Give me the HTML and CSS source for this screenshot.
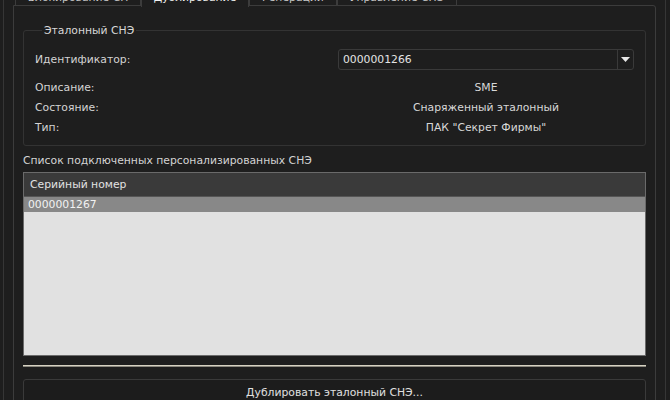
FILE: index.html
```html
<!DOCTYPE html>
<html lang="ru">
<head>
<meta charset="utf-8">
<title>Дублирование</title>
<link rel="stylesheet" href="styles.css">
</head>
<body>
<div class="frame">
  <div class="tabs">
    <div class="tab tab-1">Блокирование СН</div>
    <div class="tab tab-2 active">Дублирование</div>
    <div class="tab tab-3">Генерации</div>
    <div class="tab tab-4">Управление СНЭ</div>
  </div>
  <div class="pane">
    <div class="group">
      <div class="group-title">Эталонный СНЭ</div>
      <div class="form">
        <div class="label id-label">Идентификатор:</div>
        <div class="combo">
          <span class="combo-text">0000001266</span>
          <span class="combo-btn">
            <svg width="9" height="5" viewBox="0 0 9 5"><path d="M0 0H9L4.5 5Z" fill="#e8e8e8"/></svg>
          </span>
        </div>
        <div class="label">Описание:</div>
        <div class="value">SME</div>
        <div class="label">Состояние:</div>
        <div class="value">Снаряженный эталонный</div>
        <div class="label">Тип:</div>
        <div class="value">ПАК "Секрет Фирмы"</div>
      </div>
    </div>
    <div class="list-label">Список подключенных персонализированных СНЭ</div>
    <div class="list">
      <div class="list-header">Серийный номер</div>
      <div class="list-row selected">0000001267</div>
      <div class="list-fill"></div>
    </div>
    <div class="separator"></div>
    <div class="button">Дублировать эталонный СНЭ...</div>
  </div>
</div>
</body>
</html>
```

FILE: styles.css
```css
html, body {
  margin: 0;
  padding: 0;
  height: 100%;
  overflow: hidden;
  background: #1e1e1e;
}

body {
  font-family: "DejaVu Sans", Tahoma, sans-serif;
  font-size: 10.8px;
  color: #d4d4d4;
}

.frame {
  margin: -14px 4px 0 3px;
  padding: 0 9px;
  height: 440px;
  border-left: 1px solid #363636;
  border-right: 1px solid #363636;
  display: flex;
  flex-direction: column;
}

.tabs {
  display: flex;
  height: 20px;
  padding-left: 2px;
}

.tab {
  box-sizing: border-box;
  height: 20px;
  border: 1px solid #3c3c3c;
  border-radius: 3px 3px 0 0;
  color: #c8c8c8;
  padding-top: 5px;
  line-height: 12px;
  text-align: center;
  background: #1e1e1e;
  white-space: nowrap;
  overflow: hidden;
}

.tab-1 { width: 126px; }
.tab-2 { width: 108px; }
.tab-3 { width: 88px; }
.tab-4 { width: 120px; }

.tab.active {
  position: relative;
  z-index: 1;
  height: 21px;
  margin-bottom: -1px;
  border-bottom: none;
  color: #f2f2f2;
}

.pane {
  flex: 1;
  border: 1px solid #3c3c3c;
  border-radius: 0 3px 0 0;
  margin-top: -1px;
  padding: 24px 9px 0 9px;
  display: flex;
  flex-direction: column;
}

.group {
  border: 1px solid #333333;
  border-radius: 3px;
  padding: 0 11px 8px 11px;
}

.group-title {
  width: fit-content;
  margin: -7px 0 0 7px;
  padding: 0 2px;
  background: #1e1e1e;
  line-height: 13px;
  color: #d8d8d8;
}

.form {
  margin-top: 12px;
  display: grid;
  grid-template-columns: 303px 1fr;
  grid-template-rows: 28px;
  grid-auto-rows: 20px;
  align-items: center;
}

.form .label:first-child,
.combo {
  margin-bottom: 7px;
}

.combo {
  box-sizing: border-box;
  height: 21px;
  border: 1px solid #3a3a3a;
  border-radius: 3px;
  display: flex;
  align-items: center;
  color: #e4e4e4;
}

.combo-text {
  flex: 1;
  padding-left: 4px;
}

.combo-btn {
  width: 15px;
  height: 100%;
  border-left: 1px solid #3a3a3a;
  display: flex;
  align-items: center;
  justify-content: center;
}

.value {
  text-align: center;
  color: #d8d8d8;
}

.list-label {
  margin-top: 8px;
  line-height: 13px;
  color: #d4d4d4;
}

.list {
  margin-top: 5px;
  height: 184px;
  box-sizing: border-box;
  border: 1px solid #6a6a6a;
  display: flex;
  flex-direction: column;
}

.list-header {
  height: 24px;
  box-sizing: border-box;
  background: #3a3a3a;
  border-bottom: 1px solid #555;
  padding-left: 6px;
  line-height: 23px;
  color: #e2e2e2;
}

.list-row {
  height: 15px;
  line-height: 15px;
  padding-left: 4px;
}

.list-row.selected {
  background: #888888;
  color: #f2f2f2;
}

.list-fill {
  flex: 1;
  background: #e1e1e1;
}

.separator {
  margin-top: 9px;
  height: 1px;
  border-top: 1px solid #d6d2c2;
  background: #8a877e;
}

.button {
  margin-top: 12px;
  height: 26px;
  border: 1px solid #3a3a3a;
  border-radius: 3px;
  background: #1c1c1c;
  text-align: center;
  line-height: 26px;
  color: #e0e0e0;
}
```
